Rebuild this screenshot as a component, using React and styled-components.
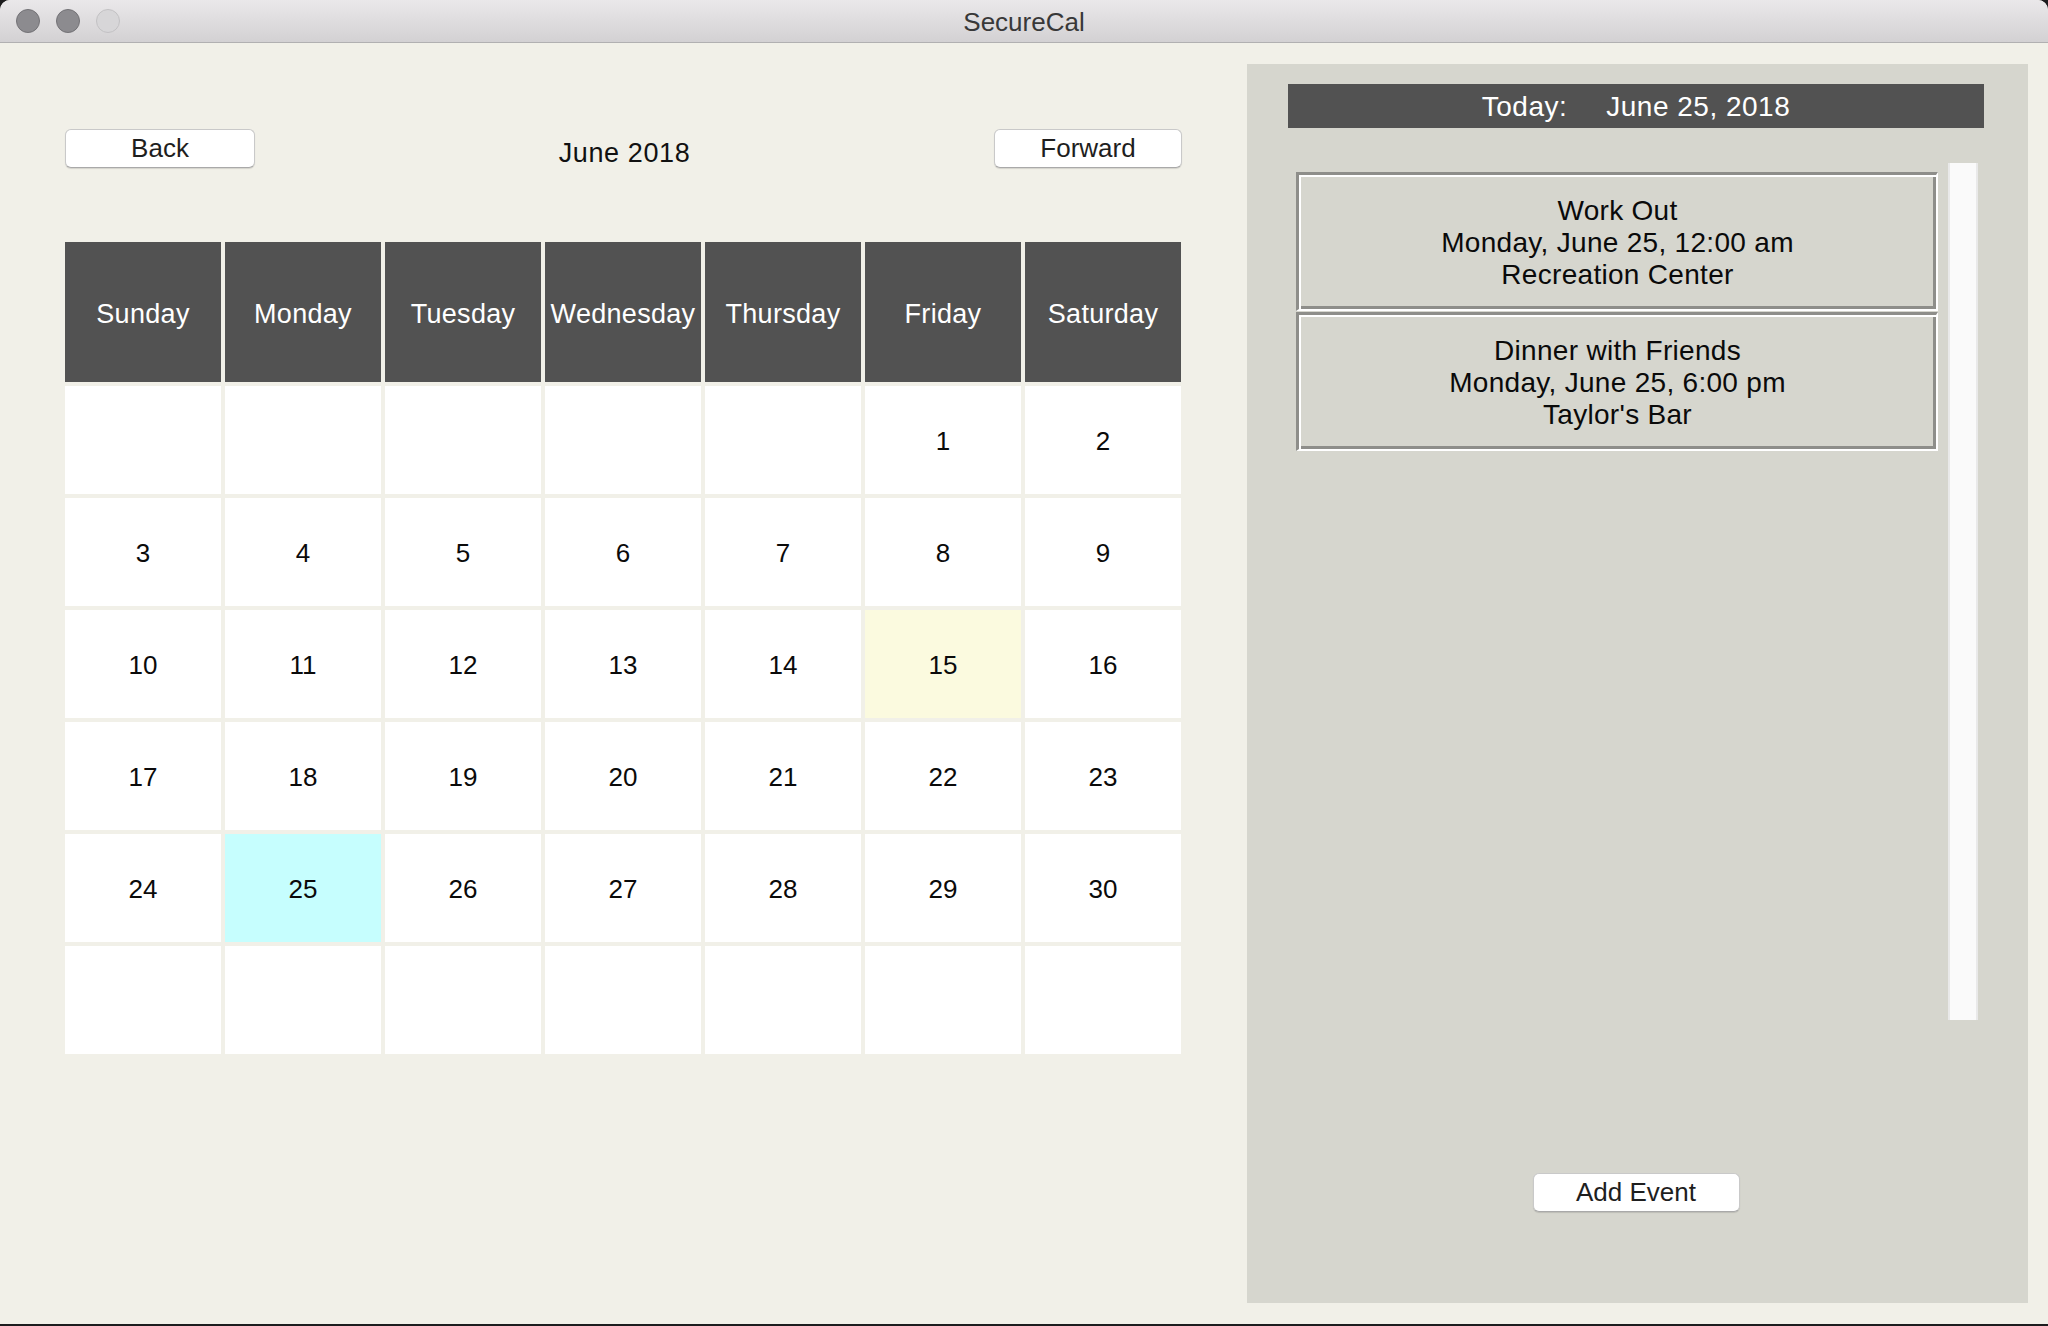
import React from 'react'
import styled, { createGlobalStyle } from 'styled-components'

const GlobalStyle = createGlobalStyle`
  html, body {
    margin: 0;
    padding: 0;
    background: #1c1c1e;
  }
  body {
    font-family: "Liberation Sans", Arial, sans-serif;
  }
`

const Window = styled.div`
  width: 2048px;
  height: 1324px;
  display: flex;
  flex-direction: column;
  background: #f1f0e8;
  border-radius: 10px 10px 0 0;
  overflow: hidden;
`

const TitleBar = styled.header`
  position: relative;
  flex: none;
  height: 43px;
  display: flex;
  align-items: center;
  justify-content: center;
  background: linear-gradient(to bottom, #eae8ea, #d3d1d3);
  border-bottom: 1px solid #b1b0b1;
  box-sizing: border-box;
`

const Lights = styled.div`
  position: absolute;
  left: 16px;
  top: 9px;
  display: flex;
  gap: 16px;
`

const Light = styled.span`
  width: 24px;
  height: 24px;
  border-radius: 50%;
  box-sizing: border-box;
  background: ${ (p) => (p.off ? '#d7d6d8' : '#8c8b8f') };
  border: 1px solid ${ (p) => (p.off ? '#c2c1c3' : '#737276') };
`

const Title = styled.h1`
  margin: 0;
  font-size: 26px;
  font-weight: 400;
  color: #383838;
  padding-top: 2px;
`

const Body = styled.main`
  flex: 1;
  display: flex;
  padding: 21px 20px 21px 65px;
  min-height: 0;
`

const CalendarColumn = styled.section`
  width: 1117px;
  flex: none;
  padding-top: 65px;
`

const NavRow = styled.div`
  display: flex;
  align-items: center;
  justify-content: space-between;
  height: 39px;
`

const Button = styled.button`
  width: ${ (p) => p.w }px;
  height: 39px;
  box-sizing: border-box;
  background: #ffffff;
  border: 1px solid #c9c9c9;
  border-bottom-color: #a9a9a9;
  border-radius: 6px;
  box-shadow: 0 1px 1px rgba(0, 0, 0, 0.12);
  font-family: "Liberation Sans", Arial, sans-serif;
  font-size: 26px;
  color: #1e1e1e;
  padding: 0;
  cursor: pointer;
`

const MonthLabel = styled.div`
  font-size: 27px;
  letter-spacing: 0.6px;
  color: #111;
  padding-top: 9px;
`

const Grid = styled.div`
  margin-top: 74px;
  display: grid;
  grid-template-columns: repeat(7, 156px);
  grid-template-rows: 140px repeat(6, 108px);
  gap: 4px;
`

const DayHead = styled.div`
  background: #525252;
  color: #ffffff;
  font-size: 27px;
  letter-spacing: 0.3px;
  display: flex;
  align-items: center;
  justify-content: center;
  padding-top: 4px;
  box-sizing: border-box;
`

const DateCell = styled.div`
  background: ${ (p) => p.bg || '#ffffff' };
  color: #0a0a0a;
  font-size: 26px;
  display: flex;
  align-items: center;
  justify-content: center;
  padding-top: 2px;
  box-sizing: border-box;
`

const Panel = styled.aside`
  margin-left: 65px;
  width: 781px;
  flex: none;
  display: flex;
  flex-direction: column;
  background: #d6d6ce;
  padding: 20px 44px 0 41px;
  box-sizing: border-box;
`

const TodayBar = styled.div`
  height: 44px;
  background: #525252;
  color: #ffffff;
  font-size: 28px;
  letter-spacing: 0.5px;
  display: flex;
  align-items: center;
  justify-content: center;
  gap: 39px;
  padding-top: 2px;
  box-sizing: border-box;
`

const ListArea = styled.div`
  margin-top: 35px;
  height: 857px;
  display: flex;
`

const EventList = styled.div`
  margin-left: 8px;
  width: 642px;
  padding-top: 9px;
  display: flex;
  flex-direction: column;
  gap: 1px;
`

const EventCard = styled.div`
  height: 139px;
  box-sizing: border-box;
  border-style: solid;
  border-width: 3px 2px 2px 3px;
  border-color: #8e8e8a #ffffff #ffffff #8e8e8a;
  box-shadow: inset 2px 2px 0 #ffffff, inset -3px -3px 0 #8e8e8a;
  display: flex;
  flex-direction: column;
  align-items: center;
  justify-content: center;
  font-size: 28px;
  letter-spacing: 0.3px;
  line-height: 32px;
  color: #0a0a0a;
  padding-top: 2px;
`

const ScrollTrack = styled.div`
  margin-left: 10px;
  width: 30px;
  box-sizing: border-box;
  background: #fafafa;
  border-left: 2px solid #e9e9e9;
  border-right: 2px solid #e9e9e9;
`

const AddRow = styled.div`
  margin-top: 153px;
  display: flex;
  justify-content: center;
`

const days = [ 'Sunday', 'Monday', 'Tuesday', 'Wednesday', 'Thursday', 'Friday', 'Saturday' ]

const cells = [
  ...Array(5).fill(null),
  ...Array.from({ length: 30 }, (_, i) => i + 1),
  ...Array(7).fill(null),
]

const highlight = { 15: '#fbfadf', 25: '#c6fefe' }

const events = [
  [ 'Work Out', 'Monday, June 25, 12:00 am', 'Recreation Center' ],
  [ 'Dinner with Friends', 'Monday, June 25, 6:00 pm', "Taylor's Bar" ],
]

const App = () => (
  <>
    <GlobalStyle />
    <Window>
      <TitleBar>
        <Lights>
          <Light />
          <Light />
          <Light off />
        </Lights>
        <Title>SecureCal</Title>
      </TitleBar>
      <Body>
        <CalendarColumn>
          <NavRow>
            <Button w={ 190 }>Back</Button>
            <MonthLabel>June 2018</MonthLabel>
            <Button w={ 188 }>Forward</Button>
          </NavRow>
          <Grid>
            { days.map((d) => <DayHead key={ d }>{ d }</DayHead>) }
            { cells.map((n, i) => (
              <DateCell key={ i } bg={ highlight[n] }>{ n }</DateCell>
            )) }
          </Grid>
        </CalendarColumn>
        <Panel>
          <TodayBar>
            <span>Today:</span>
            <span>June 25, 2018</span>
          </TodayBar>
          <ListArea>
            <EventList>
              { events.map((ev) => (
                <EventCard key={ ev[0] }>
                  { ev.map((line) => <div key={ line }>{ line }</div>) }
                </EventCard>
              )) }
            </EventList>
            <ScrollTrack />
          </ListArea>
          <AddRow>
            <Button w={ 207 }>Add Event</Button>
          </AddRow>
        </Panel>
      </Body>
    </Window>
  </>
)

export default App
